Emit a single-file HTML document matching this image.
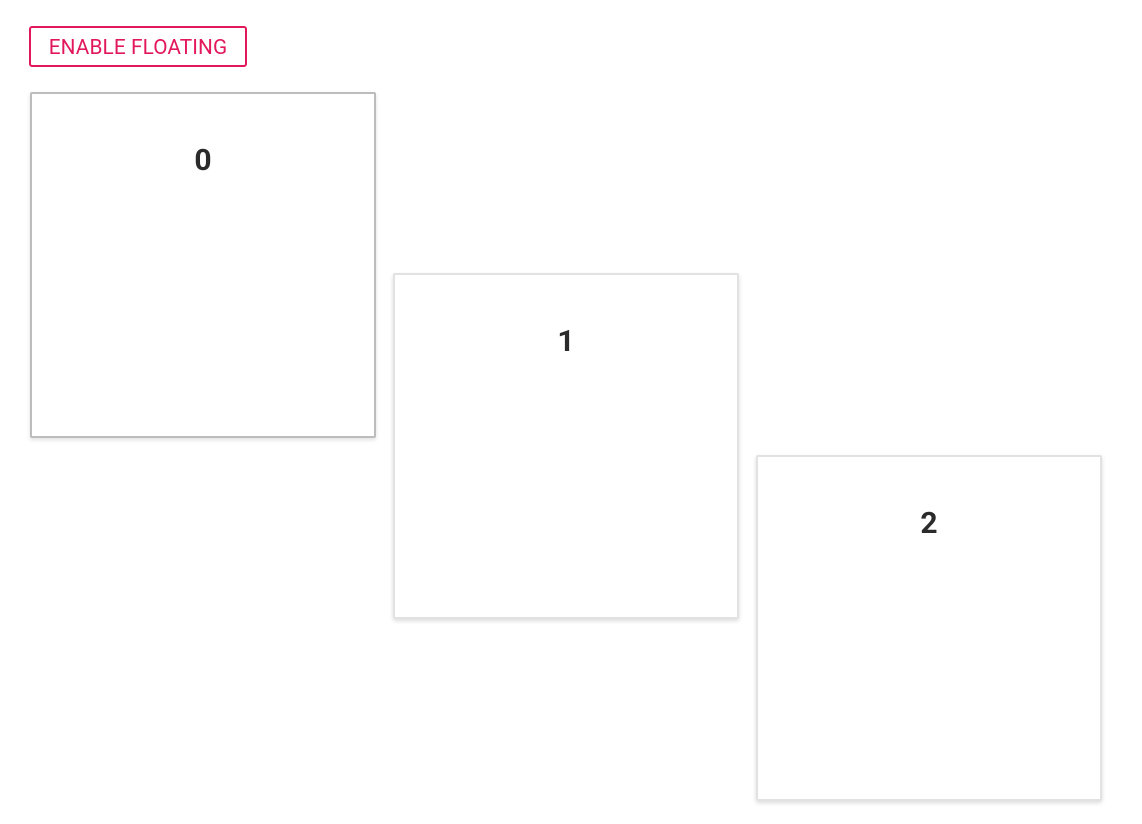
<!DOCTYPE html>
<html><head><meta charset="utf-8"><style>
html,body{margin:0;padding:0;background:#fff;width:1142px;height:824px;overflow:hidden;font-family:Roboto,"Liberation Sans",sans-serif;}
.btn{position:absolute;left:29px;top:26px;width:218px;height:41px;box-sizing:border-box;border:2px solid #e2185b;border-radius:3px;color:#e2185b;font-size:20.8px;line-height:41px;text-align:center;letter-spacing:0.1px;}
.card{position:absolute;width:346px;height:346px;box-sizing:border-box;background:#fff;}
.c0{left:30px;top:92px;border:2px solid #bcbcbc;border-radius:2px;box-shadow:0 2px 4px rgba(0,0,0,0.12);}
.c1{left:393px;top:273px;border:2px solid #e2e2e2;border-radius:2px;box-shadow:0 2px 4px rgba(0,0,0,0.14);}
.c2{left:756px;top:455px;border:2px solid #e2e2e2;border-radius:2px;box-shadow:0 2px 4px rgba(0,0,0,0.14);}
.n{position:absolute;left:0;right:0;top:49px;text-align:center;font-weight:700;font-size:30px;color:#2b2b2b;line-height:36px;}
</style></head><body>
<div class="btn">ENABLE FLOATING</div>
<div class="card c0"><div class="n">0</div></div>
<div class="card c1"><div class="n">1</div></div>
<div class="card c2"><div class="n">2</div></div>
</body></html>
